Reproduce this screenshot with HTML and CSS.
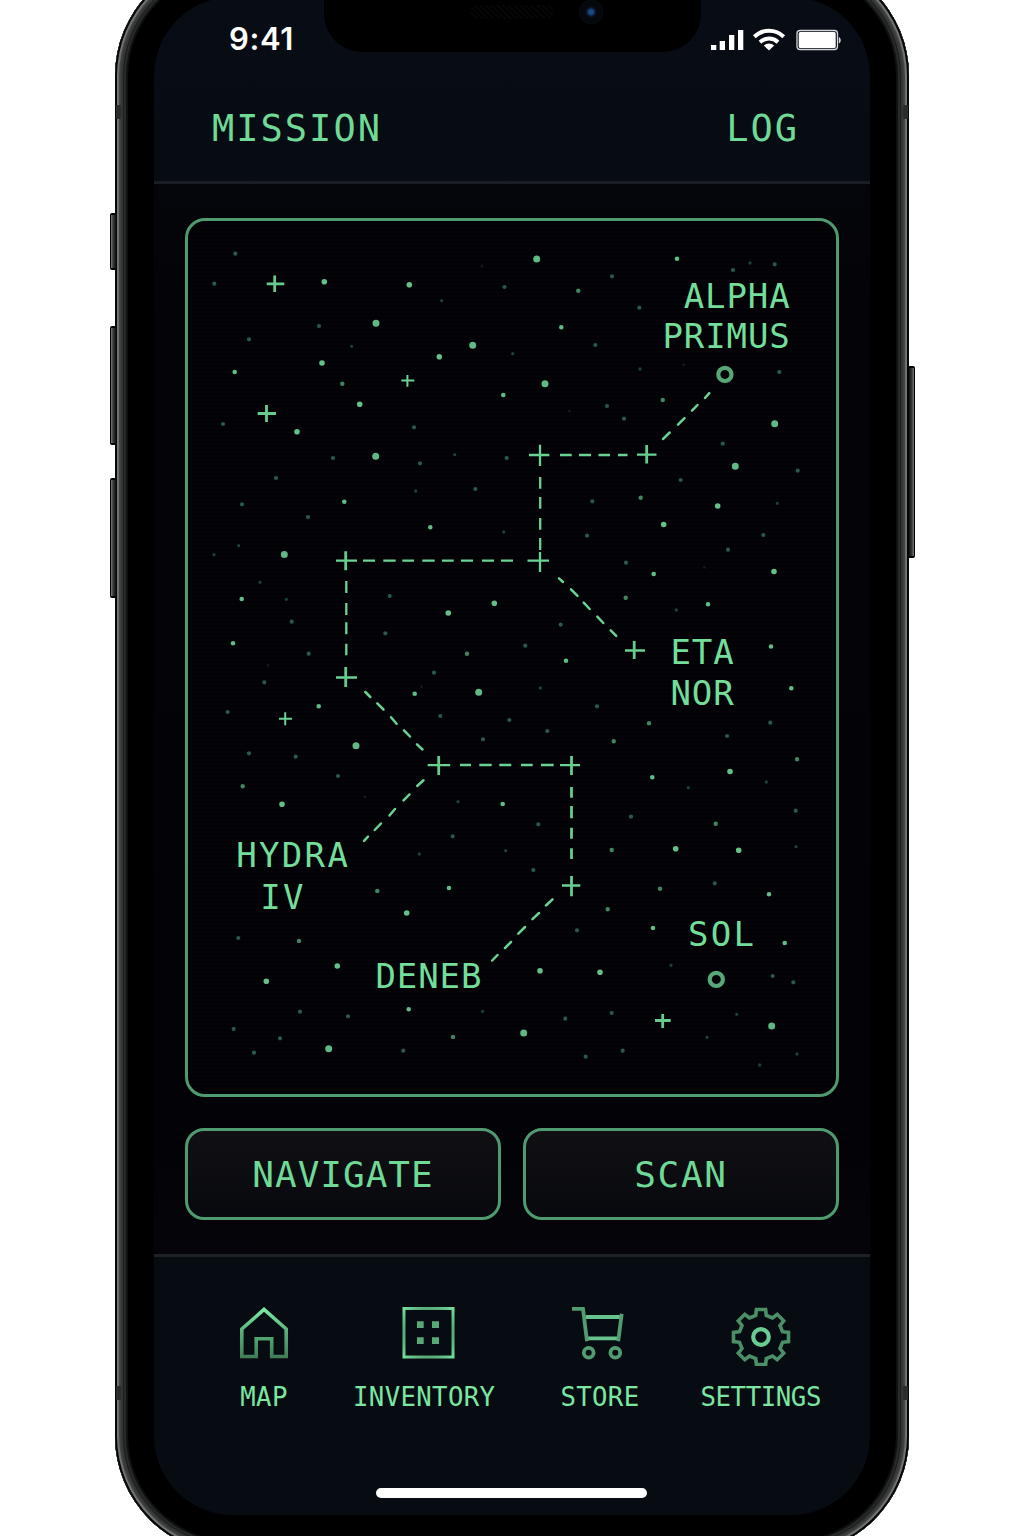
FILE: index.html
```html
<!DOCTYPE html>
<html lang="en">
<head>
<meta charset="utf-8">
<title>Mission Log</title>
<link rel="stylesheet" href="styles.css">
</head>
<body>
<div class="phone">
  <span class="key key-mute"></span>
  <span class="key key-up"></span>
  <span class="key key-down"></span>
  <span class="key key-power"></span>
  <span class="antenna antenna-top"></span>
  <span class="antenna antenna-bottom"></span>

  <div class="screen">
    <div class="notch"><span class="speaker"></span><span class="camera"></span></div>

    <header class="header">
      <div class="status-bar">
        <span class="time">9:41</span>
        <svg class="status-icons" width="132" height="24" viewBox="710 27 132 24">
          <path fill="#fff" d="M711 45h5.300v5h-5.300zM719.700 41h5.300v9h-5.300zM729 35h5.300v15h-5.300zM738 30h5.300v20h-5.300z"/>
          <g fill="none" stroke="#fff" stroke-width="4">
            <path d="M754.300 36.800a21 21 0 0 1 29.400 0"/>
            <path d="M760 42.200a13 13 0 0 1 18 0"/>
          </g>
          <path fill="#fff" d="M763.800 45.500a7.500 7.500 0 0 1 10.400 0L769 50.500z"/>
          <rect x="797" y="30.500" width="40.500" height="19" rx="3" fill="none" stroke="#d4d6da" stroke-width="1.300"/>
          <rect x="798.700" y="32" width="37" height="16" rx="1.500" fill="#fff"/>
          <path fill="#d4d6da" d="M838.800 37c2.600 1 2.600 5.500 0 6.500z"/>
        </svg>
      </div>
      <div class="title-row"><span>MISSION</span><span>LOG</span></div>
    </header>

    <main class="main">
      <section class="map">
        <svg width="648" height="873" viewBox="188 221 648 873">
          <g class="stars">
            <path class="star-xl" d="M376 323.300h0M472.700 345.300h0M375.700 456.300h0M536.700 259h0M545 383.700h0M774.700 423.700h0M735.300 466.300h0M284.300 554.500h0M478.700 692.300h0M356 745.700h0M328.700 1048.700h0M523.700 1033h0M771.700 1026h0"/>
            <path class="star-l" d="M324.300 281.700h0M409.300 284.700h0M322 363h0M439.300 356.700h0M359.700 404.300h0M297 431.700h0M717.700 506h0M663.700 524.500h0M774 571.500h0M730 771.500h0M266.300 981.300h0M738.700 850.300h0M282 804.300h0M406.700 913h0M337.300 966h0M675.700 848.700h0M540 970.700h0M600 972.300h0M448.300 613h0M494.300 603.300h0"/>
            <path class="star-m" d="M234.700 372h0M503.300 395h0M344.300 501.700h0M677 258.700h0M561.300 327.300h0M430.300 527.300h0M241.700 599h0M233 643.300h0M414.700 693.700h0M318.700 706.300h0M653.700 574h0M708 604.300h0M566 660.700h0M771 646.500h0M791.300 688.300h0M652.300 777.300h0M502.700 804h0M449 888h0M408.700 1009.300h0M769 894.300h0M653 928h0M784.700 943h0"/>
            <path class="star-s" d="M342.300 383.700h0M662.700 400h0M467 653.700h0M242.700 786.300h0M625.700 597.700h0M613.700 741.300h0M797 759.300h0M377.300 891h0M299 941h0M453 1037h0M715.700 823.700h0M611.700 850h0M660 888.700h0M607.700 909.300h0M649 723.300h0M640.700 497.700h0M578.300 290.700h0"/>
            <path class="star-dim" d="M235.300 253.700h0M214.300 283.700h0M504.500 287h0M319 326h0M249 339.300h0M223 424h0M333 458h0M414 427.300h0M420 463.300h0M506.700 458h0M276 478h0M242 504.300h0M475.300 489h0M612 276.300h0M639.300 307.700h0M733 270h0M774.700 264.300h0M595.300 345h0M607 406h0M624 418.700h0M779.300 372h0M722.700 443.700h0M797.700 470.700h0M592.300 501.300h0M680.700 480h0M308 517h0M291.700 621.700h0M389.700 596h0M385.300 633.300h0M308.700 653.700h0M264.300 682.300h0M434 672.700h0M227.700 712h0M440.300 716h0M483 739.300h0M249 753.300h0M295.700 756.700h0M338 776h0M509.300 720h0M587 535.700h0M763.300 535h0M728 549.700h0M626 562.700h0M560.700 624.700h0M525.300 645.700h0M597 706.300h0M770.300 722.700h0M727 736h0M547.300 731h0M452.700 836.300h0M238.300 938h0M300 1011.700h0M348 1016.300h0M233.700 1029h0M280 1038.300h0M254 1052.700h0M403.300 1050.700h0M538.300 824.300h0M631 816.700h0M795.700 810.700h0M533.300 870h0M714.700 883.300h0M577 930.300h0M772.700 976h0M793.300 982.300h0M565.300 1018.700h0M611.700 1013h0M622.700 1050.700h0M585.700 1056.700h0"/>
            <path class="star-faint" d="M441.700 300.700h0M351.700 346.300h0M454.700 454.700h0M415.700 491h0M750 263h0M512.700 353.700h0M640 369h0M777.300 503.300h0M503.700 532h0M238.700 545.700h0M214 554.700h0M260 582.300h0M286.300 599.300h0M676.300 610h0M540.300 688h0M688.300 787.700h0M766.300 782h0M458 801.700h0M419.300 854h0M505.700 850.700h0M482.700 1011.300h0M796 846.700h0M671 965.300h0M736.700 1014.300h0M707 1037.300h0M797 1054h0M759.700 1065h0"/>
            <path class="star-ghost" d="M482 266h0M683.700 364.700h0M268 665.300h0M365 796.700h0M704.300 567.300h0M569.500 411h0M421.500 686.500h0"/>
          </g>

          <g class="route">
            <path d="M560 455h11.700M579 455h12M598.500 455h11.500M618 455h9.500"/>
            <path d="M540.200 477v11.700M540.200 497v11.700M540.200 518v11.700M540.200 538v12"/>
            <path d="M363 560.700h12M383.300 560.700h12.400M402.300 560.700h11.700M422.300 560.700h12.400M442 560.700h11.700M461 560.700h12M482 560.700h12M501 560.700h12"/>
            <path d="M346.300 581v12M346.300 603v12M346.300 622.300v12M346.300 643.700v11.500"/>
            <path d="M460 765h11M479.300 765h12.400M499.300 765h12M521 765h11.700M541 765h12.700"/>
            <path class="heavy" d="M571.500 787v10.700M571.500 806v12.300M571.500 827.700v11M571.500 848.300v10.700"/>
            <path class="slant" d="M663 439l6.700-6.500M678 424.700l6.500-6.500M692 410.700l5.500-5.700M705 398l4.300-4.800"/>
            <path class="slant" d="M559 578.300l4 3.700M571 589.300l6.500 6.500M583.700 602.700l6 6.300M597.300 616.700l6 6.300M610.700 630.300l5.500 5.500"/>
            <path class="slant" d="M365.300 692l5 5M377.300 703.300l6.200 6.200M391 717.300l5.600 6.400M404 730.300l6 6.200M417 744.300l5.500 5.200"/>
            <path class="slant" d="M423.500 780.300l-6.300 5.700M409.500 794.300l-6 6M395 809l-5.500 6.500M381 823.500l-6.300 6.500M368 836.700l-4 4.200"/>
            <path class="slant" d="M552.500 899.300l-6.500 6.200M539 913l-6.500 6.200M525 927l-6.700 6.700M511 942l-6 6M497.500 955l-5.300 5.500"/>
          </g>

          <g class="nodes">
            <path d="M529 455h20.300M540 444.700v21.300M527.500 560.700h21.500M540 552v20M427.700 765.200h22.500M625 650.500h20M637 454.700h19.500M336 560.700h21M336 677.500h21M560 765.200h20M562 885.500h18.300"/>
            <path class="heavy" d="M646.700 445v18.500M345.700 551.300v19M345.700 667v20M438.700 756v19M634.200 641v18M571.500 756v19M571.500 876v20.300"/>
            <path class="heavy" d="M266.700 283.800h17.600M274.700 275.500v16.500M257.700 413.500h18.300M266.500 405v17M655 1020.500h15.700M662.700 1014v14"/>
            <path class="fine" d="M401.300 380.600h13M407.400 375v11.800M279 718.700h13M285.200 712.300v13"/>
            <circle cx="724.900" cy="374.400" r="6.600"/>
            <circle cx="716.300" cy="979.400" r="6.600"/>
          </g>

          <g class="names">
            <text x="683.700" y="307.500">ALPHA</text>
            <text x="662.500" y="348.300">PRIMUS</text>
            <text x="670.500" y="663.500">ETA</text>
            <text x="670.500" y="705">NOR</text>
            <text class="loose" x="236.300" y="867">HYDRA</text>
            <text class="loose" x="260.300" y="908.500">IV</text>
            <text x="375.500" y="988">DENEB</text>
            <text class="loose" x="688" y="945.500">SOL</text>
          </g>
        </svg>
      </section>
      <div class="actions">
        <button class="action navigate">NAVIGATE</button>
        <button class="action scan">SCAN</button>
      </div>
    </main>

    <footer class="footer">
      <nav class="tabs">
        <a class="tab">
          <svg width="48" height="62" viewBox="240 1304 48 62">
            <defs><linearGradient id="roof" x1="0" y1="0" x2="0" y2="1"><stop offset="0" stop-color="#78eaa2"/><stop offset=".5" stop-color="#58ad79"/><stop offset="1" stop-color="#408058"/></linearGradient></defs>
            <path fill="none" stroke="url(#roof)" stroke-width="3.600" d="M241.800 1356.500V1329L264 1309.500l22.200 19.500v27.500h-14.500v-17.800h-15.500v17.800z"/>
          </svg>
          <span>MAP</span>
        </a>
        <a class="tab">
          <svg width="60" height="62" viewBox="393.500 1304 60 62" overflow="visible">
            <defs><radialGradient id="crate" cx=".5" cy=".5" r=".7"><stop offset=".6" stop-color="#4f9a6d"/><stop offset="1" stop-color="#72dc9b"/></radialGradient></defs>
            <rect x="403.500" y="1308.500" width="49" height="48.500" fill="none" stroke="url(#crate)" stroke-width="3"/>
            <path fill="#57a878" d="M416.500 1321.300h6.700v6.700h-6.700zM431.500 1321.300h7v6.700h-7zM416.500 1337.200h6.700v6.700h-6.700zM431.500 1337.200h7v6.700h-7z"/>
          </svg>
          <span>INVENTORY</span>
        </a>
        <a class="tab store">
          <svg width="60" height="62" viewBox="569 1304 60 62">
            <g fill="none" stroke="#529c70" stroke-width="3.800">
              <path stroke="#66c48c" d="M584.500 1317h34.500M586.500 1338.300h30.500"/>
              <path d="M571 1308.900h11l4 32.400"/>
              <path d="M620.700 1313.800l-3.500 27.500"/>
              <circle cx="587.700" cy="1352.700" r="4.900"/>
              <circle cx="614.300" cy="1352.700" r="4.900"/>
            </g>
          </svg>
          <span>STORE</span>
        </a>
        <a class="tab tight">
          <svg width="60" height="62" viewBox="-30 -33 60 62">
            <path fill="none" stroke="#4b8f67" stroke-width="3.600" d="M-5.300-21.500L-4.600-27.500H4.600L5.300-21.500L11.500-19L16.200-22.700L22.700-16.200L19-11.500L21.500-5.300L27.500-4.600V4.600L21.500 5.300L19 11.500L22.700 16.200L16.200 22.700L11.500 19L5.300 21.500L4.600 27.500H-4.600L-5.300 21.500L-11.500 19L-16.200 22.700L-22.700 16.200L-19 11.500L-21.500 5.300L-27.500 4.600V-4.600L-21.500-5.300L-19-11.500L-22.700-16.200L-16.200-22.700L-11.500-19z"/>
            <circle r="7.800" fill="none" stroke="#68cb90" stroke-width="4.200"/>
          </svg>
          <span>SETTINGS</span>
        </a>
      </nav>
      <div class="home-indicator"></div>
    </footer>
  </div>
</div>
</body>
</html>
```
FILE: styles.css
```css
* { box-sizing: border-box; }

html, body { margin: 0; height: 1536px; overflow: hidden; background: #fff; }

body {
  display: flex;
  justify-content: center;
  align-items: flex-start;
  font-family: "DejaVu Sans Mono", monospace;
  color: #6fd996;
}

.phone {
  position: relative;
  flex: none;
  width: 794px;
  height: 1596px;
  margin-top: -42px;
  padding: 39px;
  border-radius: 118px;
  background: #000;
  box-shadow:
    inset 0 0 0 2px #060606,
    inset 0 0 1px 4px #737474,
    inset 0 0 1px 6px #3f4141,
    inset 0 0 1px 8px #353737,
    inset 0 0 0 9px #1a1b1b,
    inset 0 0 1px 11px #2a2c2c,
    inset 0 0 1px 13px #101111;
}

.key {
  position: absolute;
  left: -5px;
  width: 6px;
  border: solid #000;
  border-width: 2px 0 2px 1px;
  border-radius: 2px 0 0 2px;
  background: linear-gradient(90deg, #777, #333 50%, #111);
}
.key-mute { top: 255px; height: 57px; }
.key-up { top: 368px; height: 119px; }
.key-down { top: 520px; height: 120px; }
.key-power {
  top: 408px;
  left: auto;
  right: -6px;
  height: 192px;
  transform: scaleX(-1);
}

.antenna {
  position: absolute;
  left: 1px;
  right: 1px;
  height: 14px;
  border: solid #2b2c2c;
  border-width: 0 5px;
}
.antenna-top { top: 147px; }
.antenna-bottom { top: 1428px; }

.screen {
  position: relative;
  display: flex;
  flex-direction: column;
  height: 1518px;
  overflow: hidden;
  border-radius: 79px;
  background: #030308;
}

.notch {
  position: absolute;
  top: 0;
  left: 170px;
  width: 377px;
  height: 55px;
  border-radius: 0 0 38px 38px;
  background: #000;
}
.speaker {
  position: absolute;
  left: 146px;
  top: 8px;
  width: 84px;
  height: 14px;
  border-radius: 7px;
  background: repeating-linear-gradient(45deg, #060606 0 2px, #000 2px 4px);
}
.camera {
  position: absolute;
  left: 254px;
  top: 2px;
  width: 26px;
  height: 26px;
  border-radius: 50%;
  background: radial-gradient(circle, #1c4a86 0 2px, #0b1c3a 4px, #05070c 6px, #06080c 12px, #000 13px);
}

.header {
  flex: none;
  background: linear-gradient(#080c14, #070b12);
  border-bottom: 3px solid #1a1e24;
}
.status-bar {
  display: flex;
  justify-content: space-between;
  align-items: flex-start;
  height: 111px;
  padding: 23px 28px 0 75px;
}
.time {
  font: 600 31px/38px Inter, "Liberation Sans", sans-serif;
  letter-spacing: 0.6px;
  color: #fff;
}
.status-icons { margin-top: 7px; }

.title-row {
  display: flex;
  justify-content: space-between;
  height: 73px;
  padding: 0 71px 0 58px;
  font-size: 37px;
  line-height: 42px;
  letter-spacing: 2px;
}

.main {
  flex: none;
  height: 1070px;
  padding: 34px 31px 0;
  background: linear-gradient(#05060b, #030308 10%, #030307 90%, #04040a);
}
.map {
  height: 879px;
  border: 3px solid #4f9a6e;
  border-radius: 20px;
  background: repeating-linear-gradient(#010106 0 2px, #030308 2px 4px);
}
.map svg { display: block; }

.stars path { fill: none; stroke-linecap: round; stroke: #5cb881; }
.stars .star-xl { stroke-width: 7px; stroke: #5fb985; }
.stars .star-l { stroke-width: 5.6px; stroke: #62c088; }
.stars .star-m { stroke-width: 4.6px; stroke: #60bd86; }
.stars .star-s { stroke-width: 4.5px; stroke: #42845f; }
.stars .star-dim { stroke-width: 4.2px; stroke: #2a594a; }
.stars .star-faint { stroke-width: 3.3px; stroke: #1d4238; }
.stars .star-ghost { stroke-width: 3px; stroke: #0e1c1b; }

.route path, .nodes path { fill: none; stroke: #6ad292; stroke-width: 2.3px; }
.route .heavy, .nodes .heavy { stroke-width: 2.8px; stroke: #67cb8e; }
.nodes .fine { stroke-width: 2px; }
.route .slant { stroke-width: 2.5px; stroke-linecap: round; }
.nodes circle { fill: none; stroke: #57a878; stroke-width: 4.2px; }

.names { font-size: 34px; letter-spacing: 0.9px; fill: #72de99; }
.names .loose { letter-spacing: 2.3px; }

.actions {
  display: grid;
  grid-template-columns: 1fr 1fr;
  gap: 22px;
  margin-top: 31px;
}
.action {
  height: 92px;
  padding: 1px 0 0;
  border: 3px solid #4f9a6e;
  border-radius: 19px;
  background: linear-gradient(#101014, #08090e);
  color: inherit;
  font: 36px/46px "DejaVu Sans Mono", monospace;
  letter-spacing: 1px;
}
.scan { letter-spacing: 1.7px; }

.footer {
  flex: 1;
  padding-top: 47px;
  border-top: 3px solid #1e2126;
  background: #070b12;
}
.tabs {
  display: flex;
  justify-content: space-between;
  padding: 0 49px 0 86px;
}
.tab {
  display: flex;
  flex-direction: column;
  align-items: center;
  gap: 16px;
  font-size: 25.7px;
  line-height: 30px;
  letter-spacing: 0.35px;
  color: #7ae6a2;
}
.store { margin-right: -4px; }
.tight { letter-spacing: -0.4px; }

.home-indicator {
  width: 271px;
  height: 10px;
  margin: 76px 0 0 222px;
  border-radius: 5px;
  background: #fff;
}
```
